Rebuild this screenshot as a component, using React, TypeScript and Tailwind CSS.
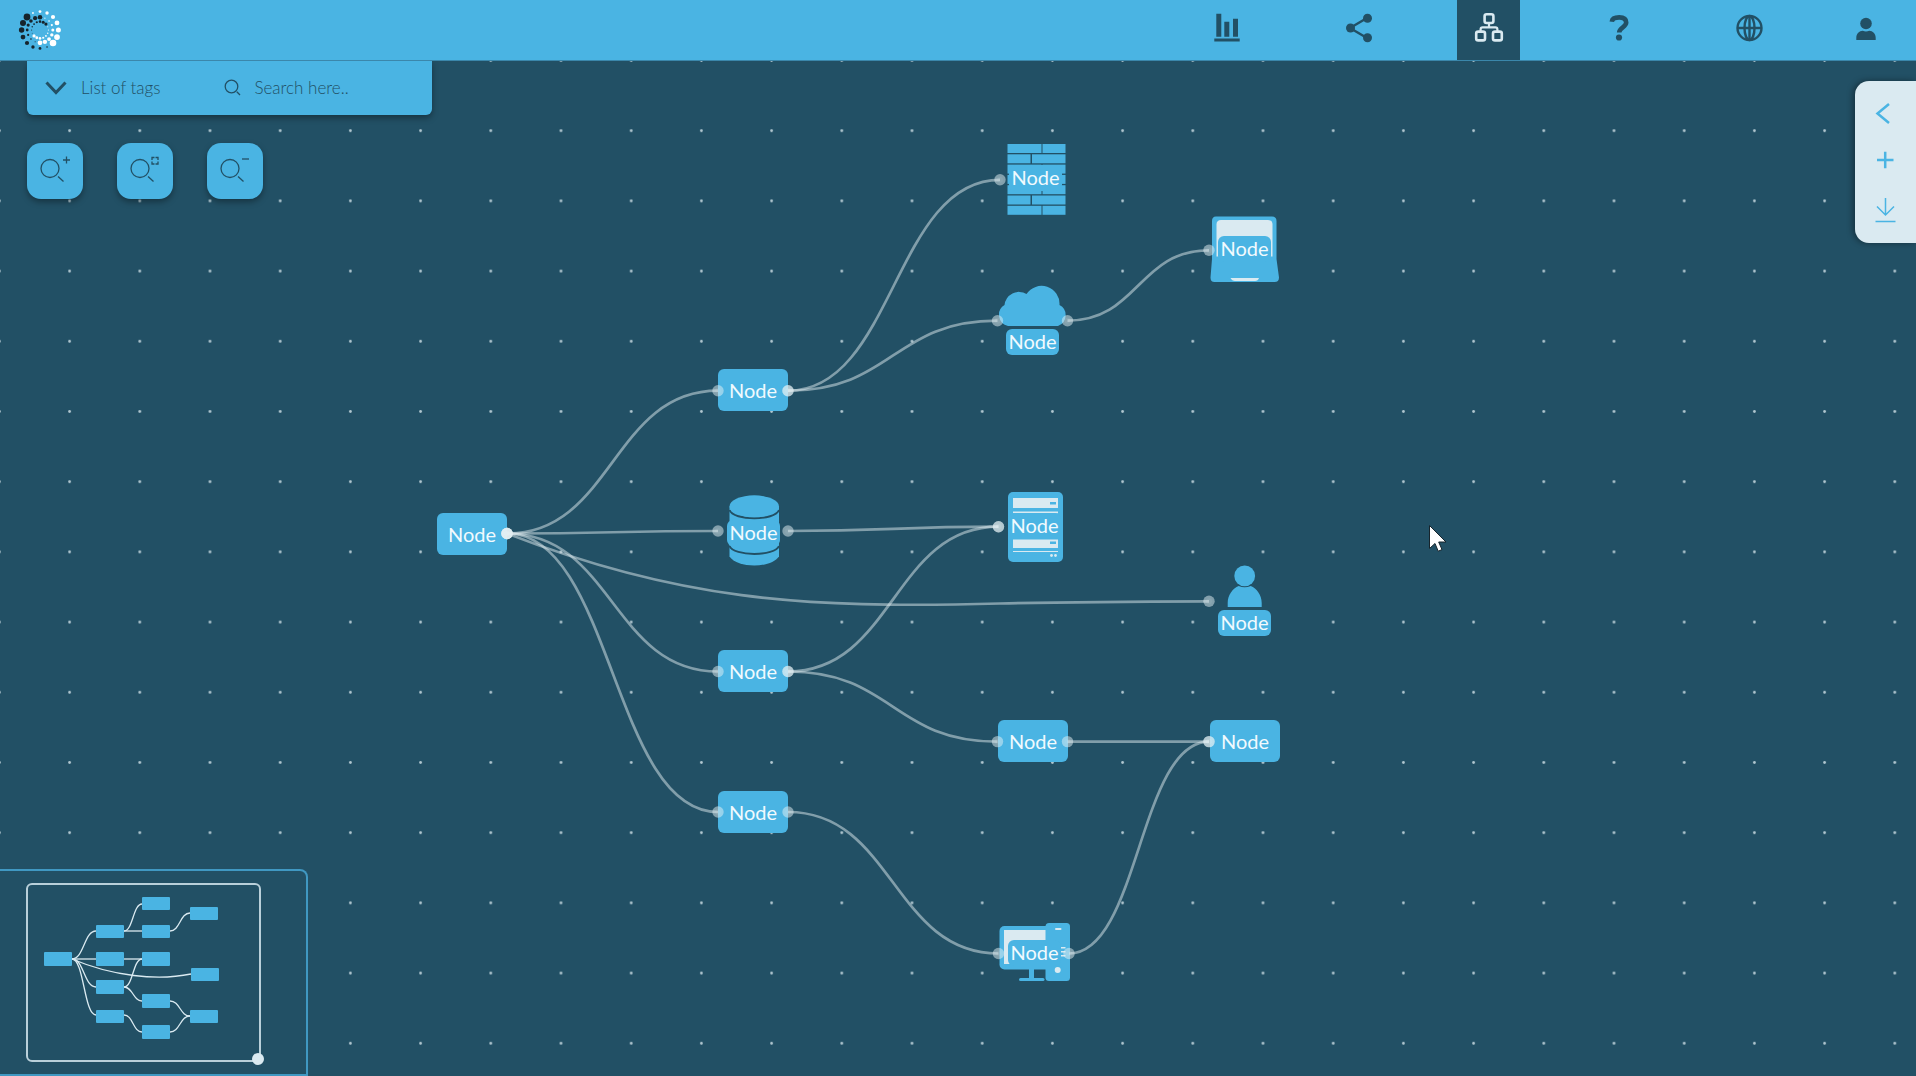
import React from "react";

type Point = [number, number];

/* ---------- logo ---------- */

type Ring = { radius: number; sizes: number[]; dark: boolean[] };

const T = true;
const F = false;

const rings: Ring[] = [
  {
    radius: 18.4,
    sizes: [1.4, 1.7, 2.1, 2.4, 2.5, 2.9, 3.3, 0.8, 1.4, 1.7, 2.1, 2.4, 2.7, 3, 3.4, 0.9],
    dark: [F, F, F, F, F, F, F, T, T, T, T, T, T, T, T, F],
  },
  {
    radius: 12.8,
    sizes: [2.3, 0.6, 0.8, 1.1, 1.5, 1.7, 1.9, 2.2, 2.4, 0.5, 0.8, 1.1, 1.4, 1.6, 1.8, 2.1],
    dark: [T, F, F, F, F, F, F, F, F, T, T, T, T, T, T, T],
  },
  {
    radius: 8.4,
    sizes: [1.3, 1.5, 1.6, 0.5, 0.6, 0.7, 0.9, 1.1, 1.3, 1.4, 1.6, 0.4, 0.5, 0.7, 0.9, 1.1],
    dark: [T, T, T, F, F, F, F, F, F, F, F, T, T, T, T, T],
  },
];

function Logo() {
  return (
    <svg viewBox="-22 -22 44 44" className="size-11" aria-hidden="true">
      {rings.map((ring) =>
        ring.sizes.map((size, i) => {
          const a = (i * Math.PI) / 8;
          return (
            <circle
              key={`${ring.radius}-${i}`}
              cx={ring.radius * Math.sin(a)}
              cy={-ring.radius * Math.cos(a)}
              r={size}
              fill={ring.dark[i] ? "#16242c" : "#ffffff"}
            />
          );
        }),
      )}
    </svg>
  );
}

/* ---------- navigation icons ---------- */

const ChartIcon = () => (
  <svg viewBox="0 0 32 32" className="size-8" fill="currentColor" aria-hidden="true">
    <path d="M3.300 1.700h5v23h-5zM11.300 9.700h5v15h-5zM20 6.700h5v18h-5zM1.300 26.500h25.400v3H1.300z" />
  </svg>
);

const ShareIcon = () => (
  <svg viewBox="0 0 32 32" className="size-8" fill="currentColor" aria-hidden="true">
    <path d="M24 6 7 16l17 10" fill="none" stroke="currentColor" strokeWidth="2.4" />
    <circle cx="24.5" cy="6.2" r="4.5" />
    <circle cx="7.5" cy="16" r="4.5" />
    <circle cx="24.5" cy="25.8" r="4.5" />
  </svg>
);

const NetworkIcon = () => (
  <svg viewBox="0 0 32 32" className="size-8" fill="none" stroke="currentColor" strokeWidth="2.6" aria-hidden="true">
    <rect x="11.6" y="2.2" width="8.8" height="8.8" rx="2" />
    <rect x="3.2" y="19.6" width="8.8" height="8.8" rx="2" />
    <rect x="20" y="19.6" width="8.8" height="8.8" rx="2" />
    <path d="M16 11v4.4M7.6 19.6v-2.2q0-2 2-2h12.8q2 0 2 2v2.2" strokeWidth="2.2" />
  </svg>
);

const HelpIcon = () => (
  <svg viewBox="0 0 32 32" className="size-8" aria-hidden="true">
    <path
      d="M8.800 9.700C9.200 6.500 12 5.400 16.200 5.400c4.400 0 7 1.900 7 5.200 0 4.600-7 4.900-7 9.900"
      fill="none"
      stroke="currentColor"
      strokeWidth="4.6"
    />
    <circle cx="16" cy="25.500" r="3.100" fill="currentColor" />
  </svg>
);

const GlobeIcon = () => (
  <svg viewBox="0 0 32 32" className="size-8" fill="none" stroke="currentColor" strokeWidth="2.4" aria-hidden="true">
    <circle cx="16.500" cy="16" r="12" />
    <ellipse cx="16.500" cy="16" rx="5" ry="12" />
    <path d="M4.500 16h24M16.500 4v24" />
  </svg>
);

const UserIcon = () => (
  <svg viewBox="0 0 32 32" className="size-8" fill="currentColor" aria-hidden="true">
    <circle cx="16" cy="11.500" r="5.800" />
    <path d="M6.300 28v-2c0-4.500 3-7 6.500-7.200 2 .8 4.400.8 6.400 0 3.500.2 6.500 2.700 6.500 7.200v2z" />
  </svg>
);

const navItems = [
  { label: "Statistics", icon: <ChartIcon />, active: false },
  { label: "Share", icon: <ShareIcon />, active: false },
  { label: "Diagram", icon: <NetworkIcon />, active: true },
  { label: "Help", icon: <HelpIcon />, active: false },
  { label: "Language", icon: <GlobeIcon />, active: false },
];

function Header() {
  return (
    <header className="relative z-20 flex h-[61px] shrink-0 items-stretch justify-between border-b border-[#3b87ab] bg-[#4ab4e3]">
      <a href="#home" aria-label="Home" className="flex items-center pl-[18px]">
        <Logo />
      </a>
      <nav className="flex gap-[67px] pr-[18px] text-[#225065]">
        {navItems.map((item) => (
          <button
            key={item.label}
            aria-label={item.label}
            className={
              item.active
                ? "flex w-[63px] items-center justify-center bg-[#225065] pb-1 text-[#daeaf1]"
                : "flex w-[63px] items-center justify-center pb-1"
            }
          >
            {item.icon}
          </button>
        ))}
        <button aria-label="Account" className="-ml-3.5 flex w-[65px] items-center justify-center pb-1">
          <UserIcon />
        </button>
      </nav>
    </header>
  );
}

/* ---------- toolbar ---------- */

function TagPanel() {
  return (
    <div className="flex h-[54px] w-[405px] items-center rounded-b-md bg-[#4ab4e3] text-[#225065] shadow-[0_3px_6px_rgba(0,0,0,0.35)]">
      <button className="flex items-center gap-3.5 pl-[18px] text-[17px] font-light">
        <svg viewBox="0 0 22 16" className="h-4 w-[22px]" fill="none" stroke="currentColor" strokeWidth="3" aria-hidden="true">
          <path d="m1.500 2.500 9.500 10 9.500-10" />
        </svg>
        List of tags
      </button>
      <label className="ml-16 flex items-center gap-3">
        <svg viewBox="0 0 18 18" className="size-[18px]" fill="none" stroke="currentColor" strokeWidth="1.300" aria-hidden="true">
          <circle cx="7.500" cy="7.500" r="6.300" />
          <path d="m12.800 12.800 3.200 3.200" />
        </svg>
        <input
          type="text"
          aria-label="Search"
          placeholder="Search here.."
          className="w-[150px] bg-transparent text-[17px] font-light outline-none placeholder:text-[#225065]"
        />
      </label>
    </div>
  );
}

const zoomTools = [
  { label: "Zoom in", mark: "M36 17h7M39.500 13.500v7" },
  {
    label: "Fit to screen",
    mark: "M35 17v-2.500h2.500M38.500 14.500h2.500v2.500M41 18.500v2.500h-2.500M37.500 21h-2.500v-2.500",
  },
  { label: "Zoom out", mark: "M35 16h7" },
];

function ZoomTools() {
  return (
    <div className="mt-7 flex gap-[34px]">
      {zoomTools.map((tool) => (
        <button
          key={tool.label}
          aria-label={tool.label}
          className="size-14 rounded-[14px] bg-[#4ab4e3] text-[#225065] shadow-[0_3px_6px_rgba(0,0,0,0.35)]"
        >
          <svg viewBox="0 0 56 56" className="size-14" fill="none" stroke="currentColor" strokeWidth="1.300" aria-hidden="true">
            <circle cx="23" cy="25.500" r="9" />
            <path d="m31 33.500 5.500 5" />
            <path d={tool.mark} />
          </svg>
        </button>
      ))}
    </div>
  );
}

function SidePanel() {
  return (
    <aside className="flex h-[162px] w-[61px] flex-col items-start justify-between rounded-l-[14px] bg-[#daeaf1] py-3 pl-2 text-[#4ab4e3] shadow-[-2px_0_6px_rgba(0,0,0,0.4)]">
      <button aria-label="Expand panel">
        <svg viewBox="0 0 40 40" className="size-10" fill="none" stroke="currentColor" strokeWidth="2.500" aria-hidden="true">
          <path d="M26 11 14.500 20.500 26 30" />
        </svg>
      </button>
      <button aria-label="Add">
        <svg viewBox="0 0 40 40" className="size-10" fill="none" stroke="currentColor" strokeWidth="2.500" aria-hidden="true">
          <path d="M14 18h16.500M22.200 9.800v16.500" />
        </svg>
      </button>
      <button aria-label="Download">
        <svg viewBox="0 0 40 40" className="size-10" fill="none" stroke="currentColor" strokeWidth="1.500" aria-hidden="true">
          <path d="M22.500 7v16M14 15.500l8.500 8.500 8.500-8.500M12.500 30.500h20" />
        </svg>
      </button>
    </aside>
  );
}

/* ---------- diagram ---------- */

type Kind = "plain" | "firewall" | "cloud" | "laptop" | "database" | "server" | "user" | "computer";

type NodeData = { id: string; kind: Kind; x: number; y: number };

const nodes: NodeData[] = [
  { id: "root", kind: "plain", x: 437, y: 513 },
  { id: "a", kind: "plain", x: 718, y: 369 },
  { id: "b", kind: "database", x: 718, y: 495 },
  { id: "c", kind: "plain", x: 718, y: 650 },
  { id: "d", kind: "plain", x: 718, y: 791 },
  { id: "e", kind: "firewall", x: 1000, y: 144 },
  { id: "f", kind: "cloud", x: 997, y: 285 },
  { id: "g", kind: "laptop", x: 1209, y: 216 },
  { id: "h", kind: "server", x: 999, y: 492 },
  { id: "i", kind: "user", x: 1209, y: 566 },
  { id: "j", kind: "plain", x: 998, y: 720 },
  { id: "k", kind: "plain", x: 1210, y: 720 },
  { id: "l", kind: "computer", x: 999, y: 923 },
];

const BLUE = "#4ab4e3";
const ICE = "#daeaf1";
const DEEP = "#225065";

const bricks: [number, number, number][] = [
  [0, 7.5, 34], [0, 42.5, 23],
  [1, 7.5, 23], [1, 32, 33.5],
  [2, 7.5, 34], [2, 42.5, 23],
  [3, 7.5, 23], [3, 32, 33.5],
  [4, 7.5, 34], [4, 42.5, 23],
  [5, 7.5, 23], [5, 32, 33.5],
  [6, 7.5, 34], [6, 42.5, 23],
];

const drawings: Record<Exclude<Kind, "plain">, React.ReactNode> = {
  firewall: bricks.map(([row, x, w]) => (
    <rect key={`${row}-${x}`} x={x} y={row * 10.3} width={w} height="9" fill={BLUE} />
  )),
  cloud: (
    <path
      fill={BLUE}
      d="M11 41A11.500 11.500 0 0 1 7.500 20A14.500 14.500 0 0 1 29.500 9A18 18 0 0 1 62.500 20A11.500 11.500 0 0 1 61 41z"
    />
  ),
  laptop: (
    <>
      <path fill={BLUE} d="M7 .5h56q4.500 0 4.500 4.500v38l2.500 18.500q0 4.500-4.500 4.500H5.500q-4 0-4-4.500L3 43V5Q3 .5 7 .5z" />
      <path fill={ICE} d="M12 4h47q4.500 0 4.500 4.500v32h-56v-32q0-4.500 4.500-4.500z" />
      <path fill={ICE} d="M21.500 62H50q-1 3-4 3H26q-3 0-4.500-3z" />
    </>
  ),
  database: (
    <>
      <path fill={BLUE} d="M11.500 11.500v50c8 12 41.500 12 49.500 0v-50z" />
      <path fill="none" stroke={DEEP} strokeWidth="2" d="M11.500 15c4 11 45.500 11 49.500 0" />
      <path fill="none" stroke={DEEP} strokeWidth="2" d="M11.500 51c4 10.500 45.500 10.500 49.500 0" />
      <ellipse cx="36.250" cy="11.300" rx="24.700" ry="11" fill={BLUE} />
    </>
  ),
  server: (
    <>
      <rect x="9" y="0" width="55" height="70" rx="5" fill={BLUE} />
      <path fill={ICE} d="M14 6h45v10H14zM14 19.500h45v1.800H14zM14 47.500h45v8.500H14zM14 59h45v1H14z" />
      <path fill={BLUE} d="M51 10h6v2.500h-6zM51 49.500h6v2.500h-6z" />
      <circle cx="52.500" cy="63.500" r="1.400" fill={ICE} />
      <circle cx="56.500" cy="63.500" r="1.400" fill={ICE} />
    </>
  ),
  user: (
    <>
      <circle cx="35.700" cy="9.900" r="10.400" fill={BLUE} />
      <path fill={BLUE} d="M18.700 41v-4c0-8 5-14.500 11-17 4 1.800 8 1.800 12 0 6 2.500 11 9 11 17v4z" />
    </>
  ),
  computer: (
    <>
      <rect x="0.500" y="3" width="52" height="43.500" rx="5" fill={BLUE} />
      <path fill={ICE} d="M5 7h42v34H5z" />
      <path fill={BLUE} d="M30 46h5v9h-5z" />
      <rect x="20" y="55" width="25.500" height="3" rx="1.500" fill={BLUE} />
      <rect x="46.500" y="0" width="24.500" height="58" rx="3.500" fill={BLUE} />
      <rect x="56" y="5" width="6.500" height="2" rx="1" fill={ICE} />
      <path stroke={ICE} strokeWidth="1.400" d="M61.500 24.700h5M61.500 28.700h5M61.500 32.700h5" />
      <circle cx="58.700" cy="47" r="3" fill={ICE} />
    </>
  ),
};

/* Where the caption sits over each drawing. */
const captionSpots: Record<Exclude<Kind, "plain">, string> = {
  firewall: "left-[9px] top-[21px]",
  cloud: "left-[9px] top-[44px]",
  laptop: "left-[9px] top-[20px]",
  database: "left-[9px] top-[25px]",
  server: "left-[9px] top-[21px]",
  user: "left-[9px] top-[44px]",
  computer: "left-[9px] top-[17px]",
};

function DiagramNode({ node }: { node: NodeData }) {
  const place = { left: node.x, top: node.y };
  if (node.kind === "plain") {
    return (
      <div
        style={place}
        className="absolute flex h-[42px] w-[70px] items-center justify-center rounded-md bg-[#4ab4e3] text-xl text-[#f1fafe]"
      >
        Node
      </div>
    );
  }
  return (
    <div style={place} className="absolute h-[72px] w-[72px]">
      <svg viewBox="0 0 72 72" className="size-[72px] overflow-visible" aria-hidden="true">
        {drawings[node.kind]}
      </svg>
      <span
        className={`absolute flex h-[26px] w-[53px] items-center justify-center rounded-md bg-[#4ab4e3] pb-0.5 text-xl/6 text-[#f1fafe] ${captionSpots[node.kind]}`}
      >
        Node
      </span>
    </div>
  );
}

function link([x1, y1]: Point, [x2, y2]: Point) {
  const mid = (x1 + x2) / 2;
  return `M${x1} ${y1}C${mid} ${y1} ${mid} ${y2} ${x2} ${y2}`;
}

const edges: { from: Point; to: Point; path?: string }[] = [
  { from: [507, 533.5], to: [718, 390.7] },
  { from: [507, 533.5], to: [718, 531] },
  { from: [507, 533.5], to: [718, 671.5] },
  { from: [507, 533.5], to: [718, 812] },
  { from: [507, 533.5], to: [1209, 601.3], path: "M507 533.500C675 599 800 609 1000 603.500C1070 601.800 1140 601.500 1209 601.300" },
  { from: [788, 390.7], to: [1000, 179.8] },
  { from: [788, 390.7], to: [997.5, 320.7] },
  { from: [1067.5, 320.7], to: [1209, 250.3] },
  { from: [788, 531], to: [998.5, 526.7] },
  { from: [788, 671.5], to: [998.5, 526.7] },
  { from: [788, 671.5], to: [997.5, 741.6] },
  { from: [1067.5, 741.6], to: [1209, 741.6] },
  { from: [788, 812], to: [998.5, 953.5] },
  { from: [1069, 953.5], to: [1209, 741.6] },
];

function Port({ at: [x, y] }: { at: Point }) {
  return (
    <g fill="#e4eff4">
      <circle cx={x} cy={y} r="5.700" opacity="0.5" />
      <circle cx={x} cy={y} r="3" opacity="0.08" />
    </g>
  );
}

function Canvas() {
  return (
    <div className="absolute inset-0" role="img" aria-label="Node diagram">
      <svg className="absolute inset-0 size-full" aria-hidden="true">
        <defs>
          <pattern id="dots" x="-35.700" y="25.400" width="70.200" height="70.200" patternUnits="userSpaceOnUse">
            <circle cx="35.100" cy="35.100" r="1.400" fill="#c4d6de" opacity="0.900" />
          </pattern>
        </defs>
        <rect width="100%" height="100%" fill="url(#dots)" />
      </svg>
      {nodes.map((node) => (
        <DiagramNode key={node.id} node={node} />
      ))}
      <svg className="pointer-events-none absolute inset-0 size-full" aria-hidden="true">
        {edges.map((edge, i) => (
          <g key={i}>
            <path
              d={edge.path ?? link(edge.from, edge.to)}
              fill="none"
              stroke="#dfebf0"
              strokeWidth="2.700"
              opacity="0.5"
            />
            <Port at={edge.from} />
            <Port at={edge.to} />
          </g>
        ))}
      </svg>
      <svg viewBox="0 0 20 30" className="absolute left-[1428px] top-[524px] h-[30px] w-5" aria-hidden="true">
        <path
          d="M1.500 1.500v23l5.500-5 3.200 7.700 3.800-1.600-3.300-7.600h7.300z"
          fill="#fff"
          stroke="#16242c"
          strokeWidth="1"
        />
      </svg>
    </div>
  );
}

/* ---------- minimap ---------- */

const miniNodes: [number, number, number][] = [
  [17, 68, 14], [69, 41, 13], [69, 68, 14], [69, 96, 14], [69, 126, 13],
  [115, 13, 13], [115, 41, 13], [115, 68, 14], [115, 110, 14], [115, 141, 14],
  [163, 23, 13], [164, 84, 13], [163, 126, 13],
];

const miniLinks: [Point, Point][] = [
  [[45, 75], [69, 47]],
  [[45, 75], [69, 75]],
  [[45, 75], [69, 103]],
  [[45, 75], [69, 131]],
  [[97, 47], [115, 20]],
  [[97, 47], [115, 47]],
  [[143, 47], [163, 29]],
  [[97, 75], [115, 75]],
  [[97, 103], [115, 75]],
  [[97, 103], [115, 117]],
  [[143, 117], [163, 132]],
  [[97, 131], [115, 148]],
  [[143, 148], [163, 132]],
];

function Minimap() {
  return (
    <section
      aria-label="Minimap"
      className="flex h-[207px] w-[308px] rounded-tr-lg border-y-2 border-r-2 border-[#4098c2] bg-[#225065] pl-[26px] pt-3"
    >
      <div className="relative h-[179px] w-[235px] rounded-md border-2 border-[#b9d0da]">
        <svg viewBox="1 1 231 175" className="size-full" fill="none" aria-hidden="true">
          <g stroke={ICE} strokeWidth="1.300">
            {miniLinks.map(([from, to], i) => (
              <path key={i} d={link(from, to)} />
            ))}
            <path d="M45 75C85 92 130 97 164 90" />
          </g>
          {miniNodes.map(([x, y, h]) => (
            <rect key={`${x}-${y}`} x={x} y={y} width="28" height={h} rx="1" fill={BLUE} />
          ))}
        </svg>
        <button
          aria-label="Resize view"
          className="absolute -bottom-[5px] -right-[5px] size-3 rounded-full bg-[#daeaf1]"
        />
      </div>
    </section>
  );
}

export default function App() {
  return (
    <div className="relative flex h-screen flex-col overflow-hidden bg-[#225065] font-['Lato','Open_Sans',sans-serif]">
      <Canvas />
      <Header />
      <main className="relative z-10 flex flex-1 justify-between">
        <div className="flex flex-col justify-between">
          <div className="pl-[27px]">
            <TagPanel />
            <ZoomTools />
          </div>
          <Minimap />
        </div>
        <div className="pt-5">
          <SidePanel />
        </div>
      </main>
    </div>
  );
}
